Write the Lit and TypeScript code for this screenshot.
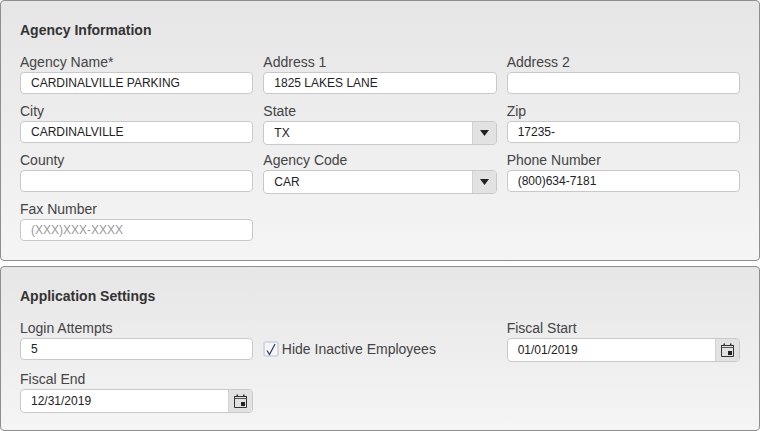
import { LitElement, html, css } from "lit";
import { customElement } from "lit/decorators.js";

const arrow = html`<svg width="9" height="6" viewBox="0 0 9 6"><path d="M0 0H9L4.5 6Z" fill="#222"/></svg>`;
const cal = html`<svg width="13" height="14" viewBox="0 0 13 14" fill="none"><path d="M.5 2.5H12.5V13.5H.5Z" stroke="#333"/><path d="M0 2H13V3H0Z" fill="#333"/><path d="M2.5 0.5H4V3H2.5ZM9 0.5H10.5V3H9Z" fill="#333"/><path d="M.5 4.5H12.5" stroke="#555"/><path d="M7 8H11V12H7Z" fill="#222"/></svg>`;

@customElement("app-root")
export class AppRoot extends LitElement {
  static styles = css`
    :host { display: block; width: 760px; height: 431px; overflow: hidden; font-family: "Liberation Sans", Arial, sans-serif; background: #fff; }
    .panel { box-sizing: border-box; border: 1px solid #8e8e8e; border-radius: 4px; padding: 0 19px; background: linear-gradient(#e6e6e6, #f5f5f5); }
    .p1 { height: 261px; margin-bottom: 5px; }
    .p2 { height: 165px; }
    h2 { margin: 0; font-size: 14px; line-height: 16px; font-weight: bold; color: #333; padding: 21px 0 14px; }
    .grid { display: grid; grid-template-columns: repeat(3, 1fr); column-gap: 10px; row-gap: 6px; }
    .p2 .grid { row-gap: 8px; }
    .field { display: flex; flex-direction: column; height: 43px; }
    label { font-size: 14px; line-height: 20px; height: 20px; color: #444; white-space: nowrap; }
    .box { box-sizing: border-box; height: 22px; flex: none; display: flex; align-items: stretch; border: 1px solid #c9c9c9; border-radius: 4px; background: #fff; overflow: hidden; }
    .box.tall { height: 24px; }
    .val { flex: 1; font-size: 12px; line-height: 21px; padding-left: 10px; color: #222; white-space: nowrap; }
    .tall .val { line-height: 22px; }
    .ph { color: #9a9a9a; }
    .btn { width: 23px; flex: none; display: flex; align-items: center; justify-content: center; background: #e2e2e2; border-left: 1px solid #d2d2d2; }
    .check { display: flex; align-items: center; height: 43px; padding-top: 19px; box-sizing: border-box; font-size: 14px; color: #444; }
    .cb { box-sizing: border-box; width: 16px; height: 16px; margin-right: 2.5px; border: 2px solid #d3d9e8; border-radius: 3px; background: #f6f6f6; display: flex; align-items: center; justify-content: center; }
  `;

  private field(label: string, value: string, opts: { ph?: boolean; btn?: unknown } = {}) {
    return html`<div class="field"><label>${label}</label><div class="box ${opts.btn ? "tall" : ""}">
      <div class="val ${opts.ph ? "ph" : ""}">${value}</div>
      ${opts.btn ? html`<div class="btn">${opts.btn}</div>` : ""}
    </div></div>`;
  }

  render() {
    return html`
      <section class="panel p1">
        <h2>Agency Information</h2>
        <div class="grid">
          ${this.field("Agency Name*", "CARDINALVILLE PARKING")}
          ${this.field("Address 1", "1825 LAKES LANE")}
          ${this.field("Address 2", "")}
          ${this.field("City", "CARDINALVILLE")}
          ${this.field("State", "TX", { btn: arrow })}
          ${this.field("Zip", "17235-")}
          ${this.field("County", "")}
          ${this.field("Agency Code", "CAR", { btn: arrow })}
          ${this.field("Phone Number", "(800)634-7181")}
          ${this.field("Fax Number", "(XXX)XXX-XXXX", { ph: true })}
        </div>
      </section>
      <section class="panel p2">
        <h2>Application Settings</h2>
        <div class="grid">
          ${this.field("Login Attempts", "5")}
          <div class="check"><span class="cb"><svg width="12" height="13" viewBox="0 0 12 13" fill="none"><path d="M2 7.5L4.5 11.5L10 1" stroke="#2f3d5c" stroke-width="1.2"/></svg></span>Hide Inactive Employees</div>
          ${this.field("Fiscal Start", "01/01/2019", { btn: cal })}
          ${this.field("Fiscal End", "12/31/2019", { btn: cal })}
        </div>
      </section>
    `;
  }
}
